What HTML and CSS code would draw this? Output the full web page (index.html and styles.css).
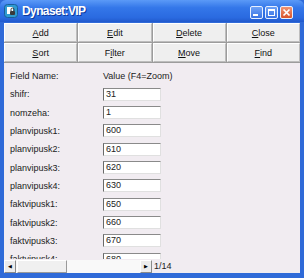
FILE: index.html
```html
<!DOCTYPE html>
<html lang="en">
<head>
  <meta charset="UTF-8">
  <title>Dynaset:VIP</title>
  <link rel="stylesheet" href="styles.css">
</head>
<body>

<div class="window">
  <div class="titlebar">
    <svg class="app-icon" width="14" height="14" viewBox="0 0 14 14">
      <rect x="0.5" y="0.5" width="13" height="13" rx="3" fill="#2f9bd0" stroke="#1a5e9a"/>
      <rect x="3" y="3" width="6" height="7" fill="#ffffff"/>
      <rect x="6" y="7" width="5" height="4" rx="1" fill="#3a3a3a"/>
      <path d="M7 7 V5.5 a1.5 1.5 0 0 1 3 0 V7" fill="none" stroke="#3a3a3a" stroke-width="1"/>
    </svg>
    <span class="title">Dynaset:VIP</span>
    <div class="controls">
      <span class="ctl">
        <svg width="11" height="11" viewBox="0 0 11 11"><rect x="2" y="7" width="5" height="2" fill="#fff"/></svg>
      </span>
      <span class="ctl">
        <svg width="11" height="11" viewBox="0 0 11 11"><rect x="2.5" y="2.5" width="6" height="6" fill="none" stroke="#fff" stroke-width="1"/><rect x="2" y="2" width="7" height="2" fill="#fff"/></svg>
      </span>
      <span class="ctl close">
        <svg width="11" height="11" viewBox="0 0 11 11"><path d="M2.5 2.5 L8.5 8.5 M8.5 2.5 L2.5 8.5" stroke="#fff" stroke-width="1.7"/></svg>
      </span>
    </div>
  </div>

  <div class="frame">
    <div class="toolbar">
      <button><u>A</u>dd</button>
      <button><u>E</u>dit</button>
      <button><u>D</u>elete</button>
      <button><u>C</u>lose</button>
      <button><u>S</u>ort</button>
      <button>F<u>i</u>lter</button>
      <button><u>M</u>ove</button>
      <button><u>F</u>ind</button>
    </div>

    <div class="content">
      <div class="fields">
        <div class="head">Field Name:</div>
        <div class="head">Value (F4=Zoom)</div>

        <div class="label">shifr:</div>
        <div class="value"><span class="box">31</span></div>
        <div class="label">nomzeha:</div>
        <div class="value"><span class="box">1</span></div>
        <div class="label">planvipusk1:</div>
        <div class="value"><span class="box">600</span></div>
        <div class="label">planvipusk2:</div>
        <div class="value"><span class="box">610</span></div>
        <div class="label">planvipusk3:</div>
        <div class="value"><span class="box">620</span></div>
        <div class="label">planvipusk4:</div>
        <div class="value"><span class="box">630</span></div>
        <div class="label">faktvipusk1:</div>
        <div class="value"><span class="box">650</span></div>
        <div class="label">faktvipusk2:</div>
        <div class="value"><span class="box">660</span></div>
        <div class="label">faktvipusk3:</div>
        <div class="value"><span class="box">670</span></div>
        <div class="label">faktvipusk4:</div>
        <div class="value"><span class="box">680</span></div>
      </div>

      <div class="status">
        <div class="hscroll">
          <span class="arrow">&#9664;</span>
          <span class="thumb"></span>
          <span class="track"></span>
          <span class="arrow">&#9654;</span>
        </div>
        <span class="pos">1/14</span>
      </div>
    </div>
  </div>
</div>

</body>
</html>
```

FILE: styles.css
```css
body {
  margin: 0;
  background-color: #ffffff;
  font-family: "Liberation Sans", Arial, sans-serif;
}

.window {
  width: 304px;
  height: 278px;
  display: flex;
  flex-direction: column;
  background-color: #2f6ad8;
  overflow: hidden;
}

.titlebar {
  height: 22px;
  flex: none;
  display: flex;
  align-items: center;
  padding: 0 11px 0 4px;
  background: linear-gradient(#5b9af7, #3477e9 35%, #2a6ae0 80%, #2159cc);
  border-radius: 6px 6px 0 0;
}

.app-icon {
  flex: none;
  margin-right: 4px;
}

.title {
  color: #ffffff;
  font-size: 12px;
  font-weight: bold;
  letter-spacing: -0.6px;
  text-shadow: 1px 1px 0 #0b3a9e;
}

.controls {
  margin-left: auto;
  display: flex;
  gap: 2px;
  padding-top: 3px;
}

.ctl {
  width: 11px;
  height: 11px;
  display: block;
  border: 1px solid #e8f0ff;
  border-radius: 2px;
  background: linear-gradient(#6ea2f7, #3a73e2);
}

.ctl svg {
  display: block;
}

.ctl.close {
  background: linear-gradient(#f09472, #d8542c);
}

.frame {
  flex: 1;
  display: flex;
  flex-direction: column;
  padding: 1px 4px 5px 4px;
  min-height: 0;
}

.toolbar {
  display: grid;
  grid-template-columns: repeat(4, 1fr);
  grid-auto-rows: 19px;
  gap: 1px;
  padding: 0 0 1px 0;
  background-color: #9c9c9c;
  flex: none;
}

.toolbar button {
  font-family: "Liberation Sans", Arial, sans-serif;
  font-size: 9px;
  color: #111111;
  background-color: #efefef;
  border: none;
  border-top: 1px solid #ffffff;
  border-left: 1px solid #ffffff;
  border-right: 1px solid #bdbdbd;
  border-bottom: 1px solid #bdbdbd;
  padding: 0;
  margin: 0;
}

.content {
  flex: 1;
  background-color: #f1ecf1;
  display: flex;
  flex-direction: column;
  overflow: hidden;
}

.fields {
  flex: 1;
  display: grid;
  grid-template-columns: 93px 1fr;
  grid-template-rows: 19px;
  grid-auto-rows: 18.35px;
  padding: 3px 0 0 6px;
  font-size: 9px;
  color: #222222;
  overflow: hidden;
  align-items: center;
}

.head {
  align-self: center;
}

.value {
  display: flex;
  align-items: center;
}

.box {
  width: 54px;
  height: 11px;
  line-height: 11px;
  padding-left: 2px;
  background-color: #ffffff;
  border-top: 1px solid #8a8a8a;
  border-left: 1px solid #6a6a6a;
  border-right: 1px solid #e0e0e0;
  border-bottom: 1px solid #e0e0e0;
  color: #222222;
}

.status {
  height: 14px;
  flex: none;
  display: flex;
  align-items: center;
  font-size: 9px;
  color: #222222;
}

.hscroll {
  width: 148px;
  height: 13px;
  display: flex;
  background-color: #f9f9f9;
}

.arrow {
  width: 10px;
  flex: none;
  font-size: 5px;
  line-height: 11px;
  text-align: center;
  color: #000000;
  background-color: #ececec;
  border: 1px solid;
  border-color: #ffffff #8a8a8a #8a8a8a #ffffff;
}

.thumb {
  width: 48px;
  flex: none;
  margin-left: 1px;
  background-color: #f0f0f0;
  border: 1px solid;
  border-color: #ffffff #9a9a9a #9a9a9a #ffffff;
}

.track {
  flex: 1;
}

.pos {
  margin-left: 2px;
}
```
